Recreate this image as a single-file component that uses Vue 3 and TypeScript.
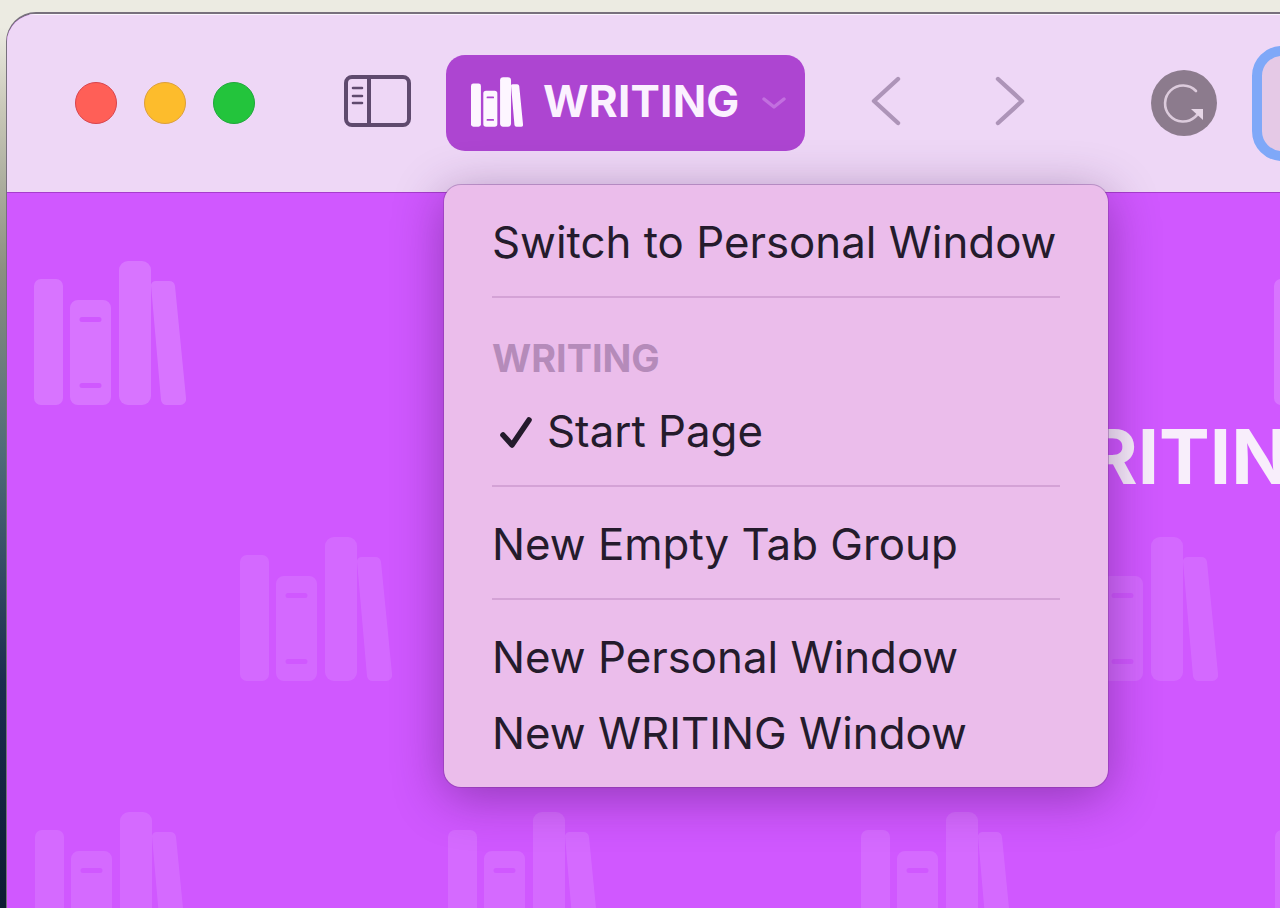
<script setup lang="ts">
interface Shelf {
  x: number
  y: number
  opacity: number
}

const columns = [34, 447, 860, 1274]
const contentTop = 193
const shelves: Shelf[] = [
  ...columns.map((x) => ({ x, y: 261 - contentTop, opacity: 0.17 })),
  { x: 240, y: 537 - contentTop, opacity: 0.1 },
  { x: 653, y: 537 - contentTop, opacity: 0.1 },
  { x: 1066, y: 537 - contentTop, opacity: 0.1 },
  ...columns.map((x) => ({ x: x + 1, y: 812 - contentTop, opacity: 0.11 })),
]

const menuGroups = [
  ['Switch to Personal Window'],
  ['New Empty Tab Group'],
  ['New Personal Window', 'New WRITING Window'],
]
</script>

<template>
  <div class="screen">
    <svg class="defs" width="0" height="0" aria-hidden="true">
      <symbol id="books" viewBox="0 0 152 144">
        <rect x="0" y="18" width="29" height="126" rx="7" />
        <path
          fill-rule="evenodd"
          d="M44 39h25a8 8 0 0 1 8 8v89a8 8 0 0 1-8 8H44a8 8 0 0 1-8-8V47a8 8 0 0 1 8-8zM48 56a2.5 2.5 0 0 0 0 5h17a2.5 2.5 0 0 0 0-5zM48 122a2.5 2.5 0 0 0 0 5h17a2.5 2.5 0 0 0 0-5z"
        />
        <path d="M94 0h14a9 9 0 0 1 9 9v126a9 9 0 0 1-9 9H94a9 9 0 0 1-9-9V9a9 9 0 0 1 9-9z" />
        <path d="M117 24a5 5 0 0 1 5-4h13a6 6 0 0 1 6 5l11 112a6 6 0 0 1-6 7h-13a6 6 0 0 1-6-5z" />
      </symbol>
    </svg>

    <div class="window">
      <header class="toolbar">
        <div class="traffic">
          <span class="light red"></span>
          <span class="light yellow"></span>
          <span class="light green"></span>
        </div>

        <svg class="sidebar-icon" viewBox="0 0 67 52" fill="none" stroke="#5f4a6e" stroke-width="4">
          <rect x="2" y="2" width="63" height="48" rx="6" />
          <path d="M25 2v48" />
          <path d="M9 13h9M9 21h9M9 28h9" stroke-width="2.6" stroke-linecap="round" />
        </svg>

        <button class="group-button">
          <svg class="group-books"><use href="#books" /></svg>
          <span class="group-name">WRITING</span>
          <svg class="group-caret" viewBox="0 0 24 12" fill="none" stroke="#c26fdf" stroke-width="3.4" stroke-linecap="round" stroke-linejoin="round">
            <path d="M2 2l10 8 10-8" />
          </svg>
        </button>

        <svg class="nav back" viewBox="0 0 30 50" fill="none" stroke="#ad94b8" stroke-width="4.4" stroke-linecap="round" stroke-linejoin="round">
          <path d="M27 3L3 25l24 22" />
        </svg>
        <svg class="nav forward" viewBox="0 0 30 50" fill="none" stroke="#ad94b8" stroke-width="4.4" stroke-linecap="round" stroke-linejoin="round">
          <path d="M3 3l24 22L3 47" />
        </svg>

        <svg class="grammarly" viewBox="0 0 66 66">
          <circle cx="33" cy="33" r="33" fill="#8c7b8d" />
          <path d="M45 21A18 18 0 1 0 44 47L50 41" fill="none" stroke="#dccbdc" stroke-width="2.6" stroke-linecap="round" />
          <path d="M40 39h12v11z" fill="#e6d6e6" />
        </svg>

        <div class="address"></div>
      </header>

      <main class="content">
        <svg class="pattern">
          <use
            v-for="(shelf, i) in shelves"
            :key="i"
            href="#books"
            :x="shelf.x - 7"
            :y="shelf.y"
            width="152"
            height="144"
            :opacity="shelf.opacity"
          />
        </svg>
        <h1 class="hero">WRITING</h1>
      </main>
    </div>

    <nav class="menu">
      <div class="menu-item">{{ menuGroups[0][0] }}</div>
      <hr class="sep" />
      <div class="menu-label">WRITING</div>
      <div class="menu-item checked">
        <svg class="check" viewBox="0 0 32 32" fill="none" stroke="#241b2c" stroke-width="5.6" stroke-linecap="round" stroke-linejoin="round">
          <path d="M3 19l9 10L29 4" />
        </svg>
        Start Page
      </div>
      <hr class="sep" />
      <div class="menu-item">{{ menuGroups[1][0] }}</div>
      <hr class="sep" />
      <div v-for="label in menuGroups[2]" :key="label" class="menu-item">{{ label }}</div>
    </nav>
  </div>
</template>

<style scoped>
.screen {
  position: relative;
  width: 1280px;
  height: 908px;
  overflow: hidden;
  padding: 12px 0 0 6px;
  box-sizing: border-box;
  font-family: Inter, "Liberation Sans", sans-serif;
  background: linear-gradient(180deg, #ecebe2 0, #ecebe2 3%, #c9c8b8 12%, #8a8f80 30%, #4f6b78 50%, #1c2d50 75%, #0d1c33 100%);
}

.defs {
  position: absolute;
}

.window {
  display: flex;
  flex-direction: column;
  height: 896px;
  background: #d058ff;
  border-top: 2px solid #77707c;
  border-left: 1px solid #77707c;
  border-top-left-radius: 30px;
  overflow: hidden;
  box-sizing: border-box;
}

.toolbar {
  display: flex;
  align-items: center;
  flex-shrink: 0;
  height: 179px;
  padding: 0 0 0 68px;
  box-sizing: border-box;
  background: #eed7f6;
  border-bottom: 1px solid #a63dcc;
  box-shadow: inset 0 1px 0 #fbf4fd;
}

.traffic {
  display: flex;
  gap: 27px;
}

.light {
  width: 42px;
  height: 42px;
  border-radius: 50%;
  box-sizing: border-box;
}

.red {
  background: #ff5f57;
  border: 1px solid #d8434c;
}

.yellow {
  background: #fdbc2c;
  border: 1px solid #dc9f3a;
}

.green {
  background: #23c43c;
  border: 1px solid #1fa83a;
}

.sidebar-icon {
  width: 67px;
  height: 52px;
  margin: 0 0 4px 89px;
  flex-shrink: 0;
}

.group-button {
  display: flex;
  align-items: center;
  width: 359px;
  height: 96px;
  margin-left: 35px;
  padding: 0 0 0 25px;
  flex-shrink: 0;
  box-sizing: border-box;
  border: none;
  border-radius: 19px;
  background: #ad45d1;
  font-family: inherit;
}

.group-books {
  width: 52px;
  height: 50px;
  margin-bottom: 3px;
  fill: #fdf6ff;
  flex-shrink: 0;
}

.group-name {
  margin-left: 20px;
  padding-bottom: 4px;
  color: #fbf1ff;
  font-size: 44px;
  font-weight: 700;
  line-height: 1;
  letter-spacing: 0.2px;
}

.group-caret {
  width: 24px;
  height: 12px;
  margin: 0 0 0 22px;
}

.nav {
  width: 30px;
  height: 50px;
  margin-bottom: 4px;
  flex-shrink: 0;
}

.back {
  margin-left: 66px;
}

.forward {
  margin-left: 94px;
}

.grammarly {
  width: 66px;
  height: 66px;
  margin-left: 126px;
  flex-shrink: 0;
}

.address {
  width: 70px;
  height: 115px;
  margin-left: 35px;
  flex-shrink: 0;
  box-sizing: border-box;
  border: 10px solid #7fa8f8;
  border-radius: 30px;
  background: #e5c9e6;
}

.content {
  position: relative;
  flex: 1;
  overflow: hidden;
}

.pattern {
  position: absolute;
  inset: 0;
  width: 100%;
  height: 100%;
  fill: #fff;
}

.hero {
  position: relative;
  margin: 0;
  padding-top: 223px;
  padding-left: 1002px;
  color: #f8eefb;
  font-size: 76px;
  font-weight: 700;
  line-height: 80px;
  white-space: nowrap;
}

.menu {
  position: absolute;
  left: 444px;
  top: 185px;
  width: 664px;
  height: 602px;
  padding: 20px 48px 0;
  box-sizing: border-box;
  border-radius: 17px;
  background: #ebbdeb;
  box-shadow: 0 0 0 1px rgba(120, 50, 140, 0.35), 0 10px 50px rgba(60, 15, 80, 0.42);
  color: #241b2c;
}

.menu-item {
  display: flex;
  align-items: center;
  height: 76px;
  font-size: 43.8px;
  line-height: 1;
  white-space: nowrap;
}

.menu-label {
  display: flex;
  align-items: center;
  height: 68px;
  margin-top: 27px;
  color: #b58bba;
  font-size: 37.8px;
  font-weight: 700;
  line-height: 1;
}

.checked {
  padding-left: 8px;
  margin: 1px 0;
}

.check {
  width: 32px;
  height: 32px;
  margin-right: 15px;
}

.sep {
  height: 2px;
  margin: 15px 0 20px;
  border: none;
  background: #d4a2d6;
}
</style>

<style>
html,
body {
  margin: 0;
  background: #ecebe2;
}
</style>
